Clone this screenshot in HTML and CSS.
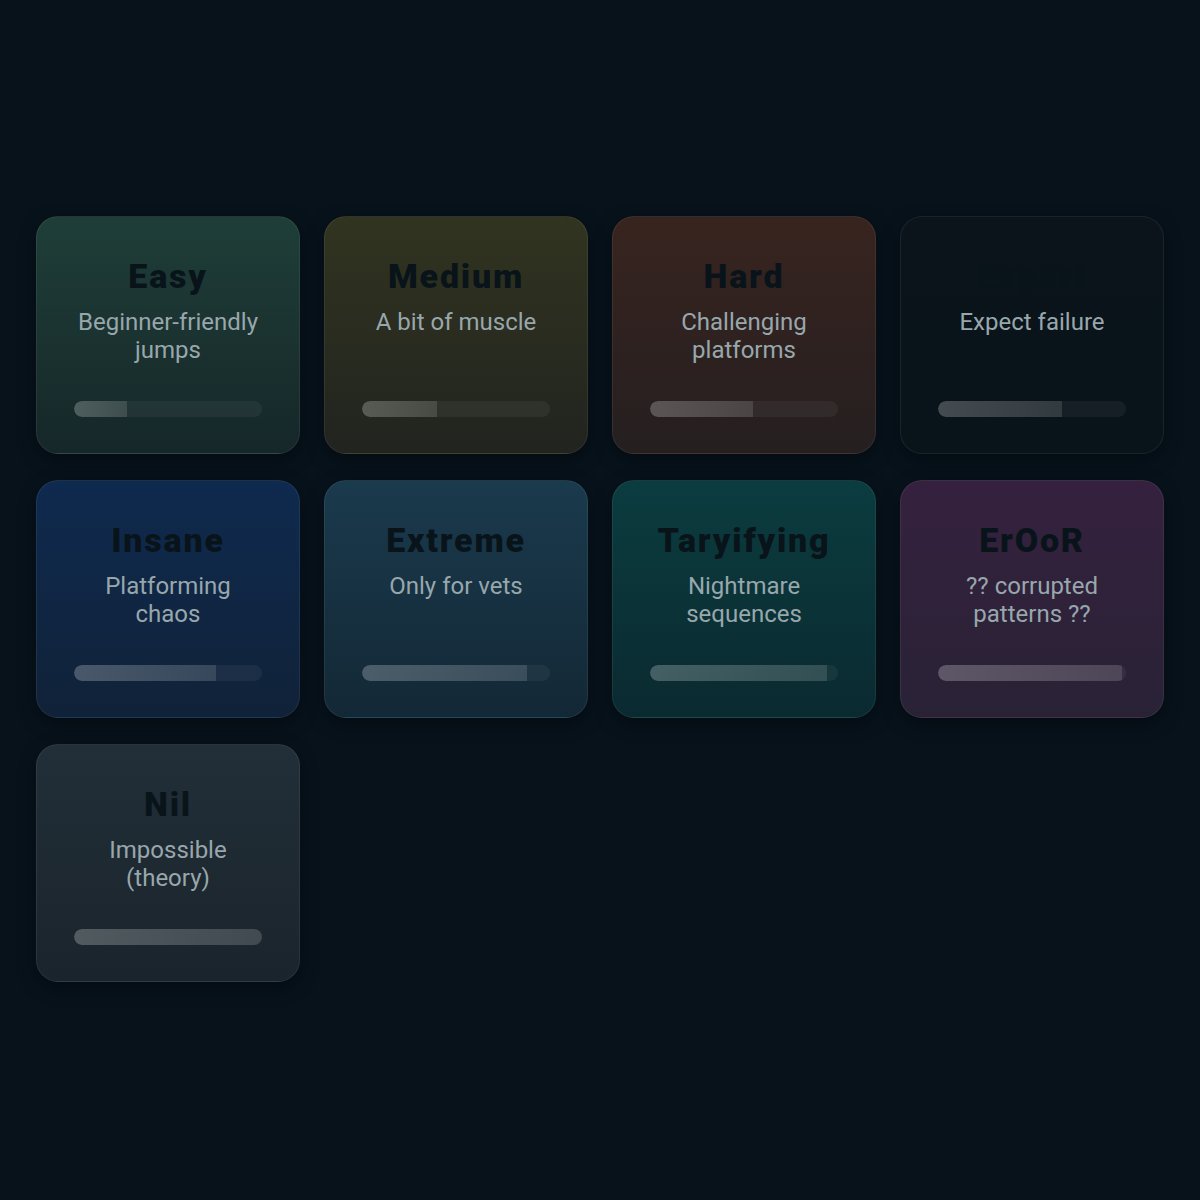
FILE: index.html
```html
<!DOCTYPE html>
<html>
	<head>
		<meta charset="utf-8">
		<title>Difficulty</title>
		<link rel="stylesheet" href="styles.css">
	</head>
	<body>
		<div class="levels">
			<div class="card easy">
				<h2>Easy</h2>
				<p>Beginner-friendly jumps</p>
				<div class="bar"><span style="width:28%"></span></div>
			</div>
			<div class="card medium">
				<h2>Medium</h2>
				<p>A bit of muscle</p>
				<div class="bar"><span style="width:40%"></span></div>
			</div>
			<div class="card hard">
				<h2>Hard</h2>
				<p>Challenging platforms</p>
				<div class="bar"><span style="width:55%"></span></div>
			</div>
			<div class="card expert">
				<h2>Expert</h2>
				<p>Expect failure</p>
				<div class="bar"><span style="width:66%"></span></div>
			</div>
			<div class="card insane">
				<h2>Insane</h2>
				<p>Platforming chaos</p>
				<div class="bar"><span style="width:75.5%"></span></div>
			</div>
			<div class="card extreme">
				<h2>Extreme</h2>
				<p>Only for vets</p>
				<div class="bar"><span style="width:88%"></span></div>
			</div>
			<div class="card terror">
				<h2>Taryifying</h2>
				<p>Nightmare sequences</p>
				<div class="bar"><span style="width:94%"></span></div>
			</div>
			<div class="card error">
				<h2>ErOoR</h2>
				<p>?? corrupted patterns ??</p>
				<div class="bar"><span style="width:98%"></span></div>
			</div>
			<div class="card nil">
				<h2>Nil</h2>
				<p>Impossible (theory)</p>
				<div class="bar"><span style="width:100%"></span></div>
			</div>
		</div>
	</body>
</html>
```

FILE: styles.css
```css
*{
	margin:0;
	padding:0;
	box-sizing:border-box;
}
html,body{
	background:#07121b;
}
body{
	min-height:1200px;
	font-family:Roboto,"Noto Sans",sans-serif;
}
.levels{
	display:grid;
	grid-template-columns:repeat(4,264px);
	grid-auto-rows:238px;
	column-gap:24px;
	row-gap:26px;
	padding:216px 36px 0;
}
.card{
	display:flex;
	flex-direction:column;
	align-items:center;
	text-align:center;
	padding:38px 37px 36px;
	border-radius:22px;
	border:1px solid rgba(255,255,255,0.07);
	box-shadow:0 6px 18px rgba(0,0,0,0.35);
}
.card h2{
	font-size:34px;
	line-height:42px;
	font-weight:900;
	letter-spacing:1.8px;
	color:#09141a;
}
.card p{
	margin-top:11px;
	font-size:24px;
	line-height:28px;
	color:#98a7ac;
}
.bar{
	margin-top:auto;
	width:100%;
	height:16px;
	border-radius:8px;
	background:rgba(255,255,255,0.05);
	overflow:hidden;
}
.bar span{
	display:block;
	height:100%;
	border-radius:8px 0 0 8px;
	background:linear-gradient(90deg,rgba(255,255,255,0.2),rgba(255,255,255,0.12));
}
/* 各难度的底色 */
.easy{background:linear-gradient(180deg,#1f3e38,#162729);}
.medium{background:linear-gradient(180deg,#31341f,#21241f);}
.hard{background:linear-gradient(180deg,#38241f,#251f20);}
.expert{background:linear-gradient(180deg,#0a141a,#09131a);}
.insane{background:linear-gradient(180deg,#0f2a4f,#102238);}
.extreme{background:linear-gradient(180deg,#1a3a4d,#132836);}
.terror{background:linear-gradient(180deg,#0b3c3f,#0a2a30);}
.error{background:linear-gradient(180deg,#35213f,#292235);}
.nil{background:linear-gradient(180deg,#222f38,#1a242c);}
.expert h2{color:#09141a;}
```
